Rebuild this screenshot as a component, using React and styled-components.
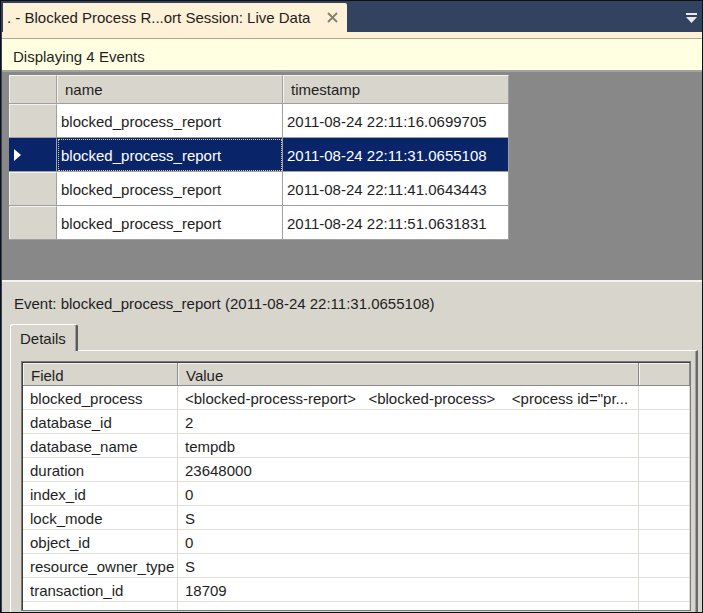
import React from "react";
import styled, { createGlobalStyle } from "styled-components";

const Global = createGlobalStyle`
  html, body { margin: 0; padding: 0; background: #ffffff; }
  body { font-family: "Liberation Sans", Arial, sans-serif; font-size: 15px; color: #1e1e1e; }
  * { box-sizing: border-box; }
`;

const Frame = styled.div`
  width: 703px;
  height: 613px;
  border: 1px solid #101010;
  background: #33435f;
  display: flex;
  flex-direction: column;
  overflow: hidden;
`;

const TitleBar = styled.div`
  height: 31px;
  flex: none;
  display: flex;
  align-items: flex-end;
  justify-content: space-between;
  padding-left: 2px;
`;

const DocTab = styled.div`
  width: 344px;
  height: 29px;
  background: #fdf1d8;
  border-top-right-radius: 2px;
  display: flex;
  align-items: center;
  justify-content: space-between;
  padding: 0 9px 0 4px;
  color: #1e1e1e;
  white-space: nowrap;
`;

const CloseIcon = styled.svg`
  width: 11px;
  height: 11px;
  display: block;
`;

const MenuIcon = styled.svg`
  width: 11px;
  height: 11px;
  display: block;
  align-self: center;
  margin-right: 5px;
  margin-top: 4px;
`;

const Body = styled.div`
  flex: 1;
  margin-left: 1px;
  display: flex;
  flex-direction: column;
  background: #d8d5cd;
  min-height: 0;
`;

const CreamStrip = styled.div`
  height: 7px;
  flex: none;
  background: #fdf0d4;
  border-bottom: 1px solid #a9a698;
`;

const InfoBar = styled.div`
  height: 33px;
  flex: none;
  background: #ffffe2;
  border-bottom: 2px solid #a2a2a2;
  display: flex;
  align-items: center;
  padding-left: 11px;
  padding-top: 3px;
`;

const GridArea = styled.div`
  height: 210px;
  flex: none;
  background: #888888;
  padding: 3px 0 0 7px;
  border-bottom: 2px solid #f4f3ef;
`;

const EventGrid = styled.div`
  display: grid;
  grid-template-columns: 48px 226px 226px;
  grid-auto-rows: 34px;
  grid-template-rows: 29px;
  width: 500px;
  background: #ffffff;
`;

const RowHead = styled.div`
  background: ${(p) => (p.$selected ? "#0a246a" : "#d8d5cd")};
  border-top: 1px solid ${(p) => (p.$selected ? "#0a246a" : "#f4f3ef")};
  border-right: 1px solid #a0a0a0;
  border-bottom: 1px solid #a0a0a0;
  box-shadow: ${(p) => (p.$selected ? "none" : "inset 1px 0 0 #f4f3ef")};
  display: flex;
  align-items: center;
  padding-left: 5px;
`;

const ColHead = styled.div`
  background: #d8d5cd;
  border-top: 1px solid #f4f3ef;
  border-right: 1px solid #a0a0a0;
  border-bottom: 1px solid #a0a0a0;
  box-shadow: inset 1px 0 0 #f4f3ef;
  display: flex;
  align-items: center;
  padding-left: 8px;
`;

const Cell = styled.div`
  background: ${(p) => (p.$selected ? "#0a246a" : "#ffffff")};
  color: ${(p) => (p.$selected ? "#ffffff" : "#1e1e1e")};
  border-right: 1px solid #a0a0a0;
  border-bottom: 1px solid #a0a0a0;
  display: flex;
  align-items: center;
  padding-left: 4px;
  padding-top: 1px;
  white-space: nowrap;
  outline: ${(p) => (p.$focus ? "1px dotted #d8cf9c" : "none")};
  outline-offset: -2px;
`;

const Arrow = styled.svg`
  width: 7px;
  height: 12px;
  display: block;
`;

const EventLabel = styled.div`
  height: 42px;
  flex: none;
  display: flex;
  align-items: center;
  padding-left: 12px;
`;

const TabRow = styled.div`
  display: flex;
  padding-left: 8px;
  flex: none;
`;

const DetailsTab = styled.div`
  height: 27px;
  padding: 0 10px 0 9px;
  display: flex;
  align-items: center;
  border-top: 1px solid #ffffff;
  border-left: 1px solid #ffffff;
  border-right: 2px solid #5a5a5a;
  border-top-left-radius: 3px;
  border-top-right-radius: 3px;
  box-shadow: inset -1px 0 0 #a0a0a0;
  margin-bottom: -1px;
  position: relative;
  background: #d8d5cd;
`;

const Pane = styled.div`
  flex: 1;
  margin: 0 4px 0 8px;
  border-top: 1px solid #ffffff;
  border-left: 1px solid #ffffff;
  border-right: 2px solid #6a6a6a;
  box-shadow: inset -1px 0 0 #a0a0a0;
  padding: 10px 5px 1px 10px;
  display: flex;
  min-height: 0;
`;

const PropTable = styled.div`
  flex: 1;
  display: grid;
  grid-template-columns: 155px 461px 1fr;
  grid-template-rows: 23px repeat(9, 24px) 1fr;
  background: #ffffff;
  border: 1px solid #7a7a7a;
  box-shadow: inset 1px 1px 0 #404040;
  padding: 1px 0 0 1px;
`;

const PropHead = styled.div`
  background: #d8d5cd;
  border-right: 1px solid #8a8a8a;
  border-bottom: 1px solid #8a8a8a;
  box-shadow: inset 1px 1px 0 #f4f3ef;
  display: flex;
  align-items: center;
  padding-left: 8px;
  padding-top: 2px;
`;

const PropCell = styled.div`
  border-right: 1px solid #dedbd3;
  border-bottom: ${(p) => (p.$last ? "none" : "1px solid #e2dfd8")};
  display: flex;
  align-items: center;
  padding-left: 7px;
  padding-top: 2px;
  white-space: nowrap;
  overflow: hidden;
  color: #1e1e1e;
`;

const events = [
  "2011-08-24 22:11:16.0699705",
  "2011-08-24 22:11:31.0655108",
  "2011-08-24 22:11:41.0643443",
  "2011-08-24 22:11:51.0631831",
];

const props = [
  ["blocked_process", "<blocked-process-report>   <blocked-process>    <process id=\"pr..."],
  ["database_id", "2"],
  ["database_name", "tempdb"],
  ["duration", "23648000"],
  ["index_id", "0"],
  ["lock_mode", "S"],
  ["object_id", "0"],
  ["resource_owner_type", "S"],
  ["transaction_id", "18709"],
];

export default function App() {
  return (
    <>
      <Global />
      <Frame>
        <TitleBar>
          <DocTab>
            <span>. - Blocked Process R...ort Session: Live Data</span>
            <CloseIcon viewBox="0 0 11 11">
              <path d="M1 1 L10 10 M10 1 L1 10" stroke="#857f6d" strokeWidth="1.8" />
            </CloseIcon>
          </DocTab>
          <MenuIcon viewBox="0 0 11 11">
            <rect x="0" y="0" width="11" height="2" fill="#e6e8ec" />
            <path d="M0 4 L11 4 L5.5 10 Z" fill="#e6e8ec" />
          </MenuIcon>
        </TitleBar>
        <Body>
          <CreamStrip />
          <InfoBar>Displaying 4 Events</InfoBar>
          <GridArea>
            <EventGrid>
              <RowHead />
              <ColHead>name</ColHead>
              <ColHead>timestamp</ColHead>
              {events.map((ts, i) => {
                const sel = i === 1;
                return (
                  <React.Fragment key={ts}>
                    <RowHead $selected={sel}>
                      {sel && (
                        <Arrow viewBox="0 0 7 12">
                          <path d="M0 0 L7 6 L0 12 Z" fill="#ffffff" />
                        </Arrow>
                      )}
                    </RowHead>
                    <Cell $selected={sel} $focus={sel}>blocked_process_report</Cell>
                    <Cell $selected={sel}>{ts}</Cell>
                  </React.Fragment>
                );
              })}
            </EventGrid>
          </GridArea>
          <EventLabel>Event: blocked_process_report (2011-08-24 22:11:31.0655108)</EventLabel>
          <TabRow>
            <DetailsTab>Details</DetailsTab>
          </TabRow>
          <Pane>
            <PropTable>
              <PropHead>Field</PropHead>
              <PropHead>Value</PropHead>
              <PropHead />
              {props.map(([f, v]) => (
                <React.Fragment key={f}>
                  <PropCell>{f}</PropCell>
                  <PropCell style={{ whiteSpace: "pre" }}>{v}</PropCell>
                  <PropCell />
                </React.Fragment>
              ))}
              <PropCell $last />
              <PropCell $last />
              <PropCell $last />
            </PropTable>
          </Pane>
        </Body>
      </Frame>
    </>
  );
}
